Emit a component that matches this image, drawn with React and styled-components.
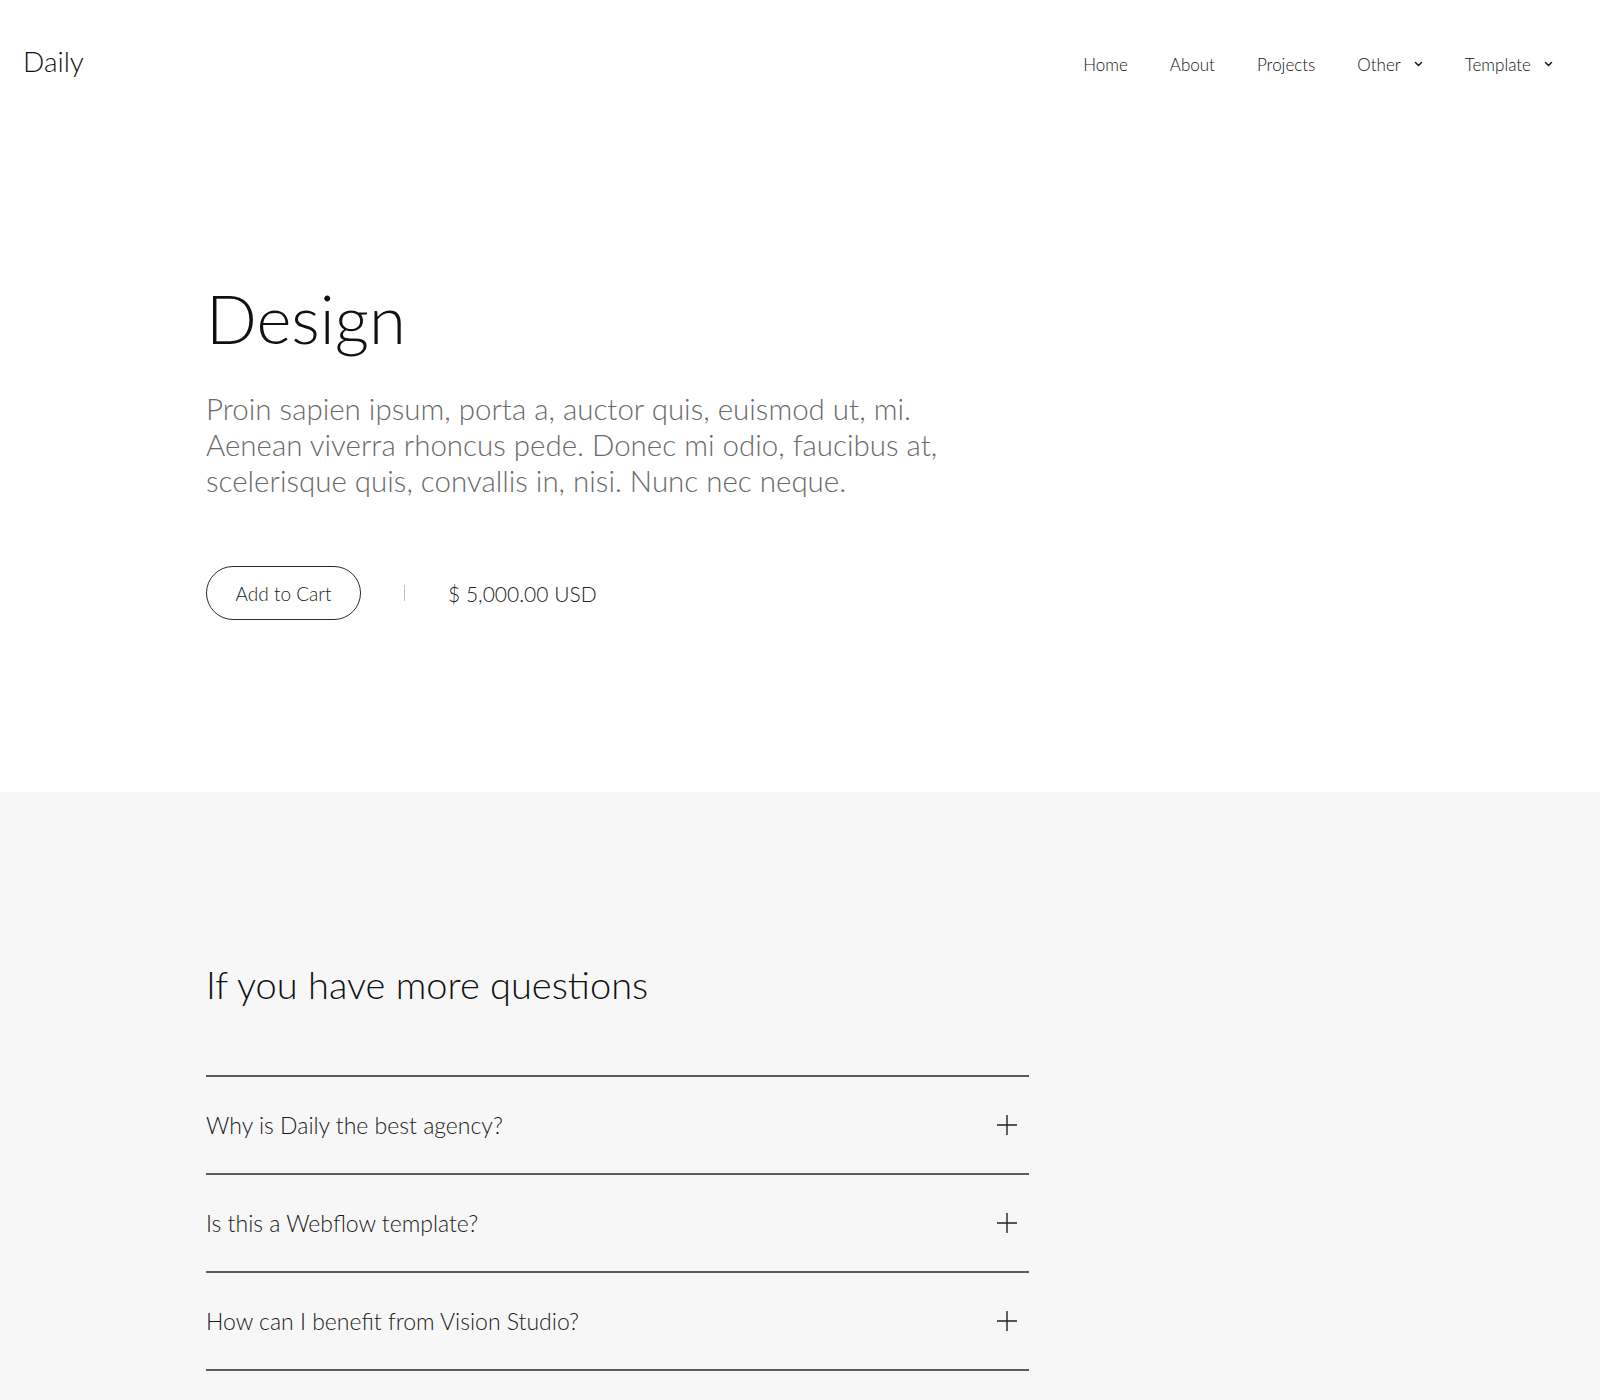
import React from 'react';
import styled, { createGlobalStyle } from 'styled-components';

const GlobalStyle = createGlobalStyle`
  body {
    margin: 0;
    background: #fff;
    font-family: "Lato", "Open Sans", sans-serif;
    color: #111;
  }
  * { box-sizing: border-box; }
`;

const questions = [
  'Why is Daily the best agency?',
  'Is this a Webflow template?',
  'How can I benefit from Vision Studio?',
];

const navItems = [
  { label: 'Home' },
  { label: 'About' },
  { label: 'Projects' },
  { label: 'Other', dropdown: true },
  { label: 'Template', dropdown: true },
];

const Chevron = () => (
  <svg width="9" height="6" viewBox="0 0 9 6" fill="none">
    <path d="M1.5 1.5L4.5 4.5L7.5 1.5" stroke="#222" strokeWidth="1.6" strokeLinecap="round" strokeLinejoin="round" />
  </svg>
);

const Plus = () => (
  <svg width="22" height="22" viewBox="0 0 22 22" fill="none">
    <path d="M11 1V21M1 11H21" stroke="#222" strokeWidth="1.4" />
  </svg>
);

const App = () => {
  return (
    <>
      <GlobalStyle />
      <Header>
        <Logo>Daily</Logo>
        <Nav>
          {navItems.map((item) => (
            <NavItem key={item.label}>
              {item.label}
              {item.dropdown && <Chevron />}
            </NavItem>
          ))}
        </Nav>
      </Header>

      <Hero>
        <Container>
          <Title>Design</Title>
          <Lead>
            Proin sapien ipsum, porta a, auctor quis, euismod ut, mi.<br />
            Aenean viverra rhoncus pede. Donec mi odio, faucibus at,<br />
            scelerisque quis, convallis in, nisi. Nunc nec neque.
          </Lead>
          <BuyRow>
            <CartButton>Add to Cart</CartButton>
            <Divider />
            <Price>$ 5,000.00 USD</Price>
          </BuyRow>
        </Container>
      </Hero>

      <Faq>
        <Container>
          <FaqTitle>If you have more questions</FaqTitle>
          <FaqList>
            {questions.map((q) => (
              <FaqItem key={q}>
                <Question>{q}</Question>
                <Plus />
              </FaqItem>
            ))}
          </FaqList>
        </Container>
      </Faq>
    </>
  );
};

export default App;

const Header = styled.header`
  height: 124px;
  display: flex;
  align-items: center;
  justify-content: space-between;
  padding: 0 26px 0 23px;
`;

const Logo = styled.div`
  font-size: 28px;
  font-weight: 300;
  color: #111;
  margin-top: -2px;
`;

const Nav = styled.nav`
  display: flex;
  align-items: center;
  margin-top: 4px;
`;

const NavItem = styled.a`
  display: flex;
  align-items: center;
  gap: 13px;
  padding: 0 21px;
  font-size: 17px;
  font-weight: 300;
  color: #111;
  cursor: pointer;
`;

const Container = styled.div`
  max-width: 1188px;
  margin: 0 auto;
`;

const Hero = styled.section`
  padding: 154px 0 172px;
`;

const Title = styled.h1`
  margin: 0;
  font-size: 67px;
  line-height: 1.2;
  font-weight: 300;
  color: #111;
`;

const Lead = styled.p`
  margin: 33px 0 0;
  font-size: 29.5px;
  line-height: 36px;
  font-weight: 300;
  color: #6a6a6a;
`;

const BuyRow = styled.div`
  display: flex;
  align-items: center;
  margin-top: 67px;
`;

const CartButton = styled.button`
  width: 155px;
  height: 54px;
  border: 1.5px solid #2a2a2a;
  border-radius: 30px;
  background: transparent;
  font-family: inherit;
  font-size: 19px;
  font-weight: 300;
  color: #222;
  cursor: pointer;
`;

const Divider = styled.span`
  width: 1px;
  height: 16px;
  background: #bdbdbd;
  margin: 0 43px;
`;

const Price = styled.span`
  font-size: 21px;
  font-weight: 300;
  color: #222;
`;

const Faq = styled.section`
  background: #f7f7f7;
  padding: 170px 0 40px;
`;

const FaqTitle = styled.h2`
  margin: 0;
  font-size: 38px;
  line-height: 1.2;
  font-weight: 300;
  color: #111;
`;

const FaqList = styled.div`
  width: 823px;
  margin-top: 67px;
  border-bottom: 2px solid #5c5c5c;
`;

const FaqItem = styled.div`
  display: flex;
  align-items: center;
  justify-content: space-between;
  height: 98px;
  padding-right: 11px;
  border-top: 2px solid #5c5c5c;
`;

const Question = styled.span`
  font-size: 23px;
  font-weight: 300;
  color: #1a1a1a;
`;
